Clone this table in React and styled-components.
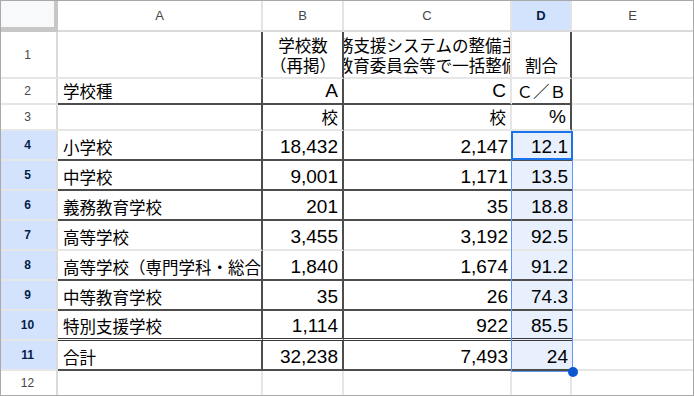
import React from 'react';
import styled, { createGlobalStyle } from 'styled-components';

const GlobalStyle = createGlobalStyle`
  html, body { margin: 0; padding: 0; background: #fff; }
  body { font-family: "Liberation Sans", Arial, "Noto Sans CJK JP", sans-serif; }
`;

const LIGHT = '2px solid #e6e6e6';
const DARK = '2px solid #4d4d4d';
const DOUBLE = '3px double #3a3a3a';
const borderOf = (k) =>
  k === 'dark' ? DARK : k === 'double' ? DOUBLE : k === 'none' ? 'none' : LIGHT;

const Sheet = styled.div`
  position: relative;
  width: 694px;
  height: 396px;
  box-sizing: border-box;
  border: 1px solid #a9a9a9;
  overflow: hidden;
  display: grid;
  grid-template-columns: 57px 205px 81px 168px 60px 121px;
  grid-template-rows: 31px 47px 26px 26px repeat(8, 30px) 24px;
  background: #fff;
`;

const Corner = styled.div`
  grid-row: 1;
  grid-column: 1;
  box-sizing: border-box;
  background: #f8f9fa;
  border-right: 4px solid #c7c7c7;
  border-bottom: 5px solid #c7c7c7;
`;

const ColHead = styled.div`
  grid-row: 1;
  grid-column: ${(p) => p.$c};
  box-sizing: border-box;
  display: flex;
  align-items: center;
  justify-content: center;
  padding-bottom: 1px;
  font-family: "Liberation Sans", Arial, sans-serif;
  font-size: 13px;
  color: ${(p) => (p.$sel ? '#041e49' : '#444746')};
  font-weight: ${(p) => (p.$sel ? 700 : 400)};
  background: ${(p) => (p.$sel ? '#d3e3fd' : '#fff')};
  border-right: ${(p) => (p.$last ? 'none' : '2px solid #e3e3e3')};
  border-bottom: 2px solid #dadada;
`;

const RowHead = styled.div`
  grid-row: ${(p) => p.$r};
  grid-column: 1;
  box-sizing: border-box;
  display: flex;
  align-items: center;
  justify-content: center;
  padding-right: 2px;
  font-family: "Liberation Sans", Arial, sans-serif;
  font-size: 12px;
  color: ${(p) => (p.$sel ? '#041e49' : '#444746')};
  font-weight: ${(p) => (p.$sel ? 700 : 400)};
  background: ${(p) => (p.$sel ? '#d3e3fd' : '#fff')};
  border-right: 2px solid #dadada;
  border-bottom: ${(p) => (p.$last ? 'none' : '2px solid #e6e6e6')};
`;

const Cell = styled.div`
  grid-row: ${(p) => p.$r};
  grid-column: ${(p) => p.$c};
  box-sizing: border-box;
  min-width: 0;
  overflow: hidden;
  display: flex;
  flex-direction: column;
  justify-content: flex-end;
  align-items: ${(p) =>
    p.$align === 'right' ? 'flex-end' : p.$align === 'center' ? 'center' : 'flex-start'};
  padding: 0 4px 2px 5px;
  background: ${(p) => (p.$sel ? '#e8f0fe' : '#fff')};
  border-right: ${(p) => borderOf(p.$br)};
  border-bottom: ${(p) => borderOf(p.$bb)};
  color: #000;
  white-space: nowrap;
  line-height: 20px;
`;

const Num = styled.span`
  display: block;
  font-family: "Liberation Sans", Arial, sans-serif;
  font-size: 19px;
  line-height: 20px;
`;

const Jp = styled.span`
  display: block;
  font-family: "Noto Sans CJK JP", "Noto Sans CJK SC", sans-serif;
  font-size: 16.5px;
  line-height: 20px;
  white-space: pre;
  text-align: center;
`;

const Range = styled.div`
  grid-row: 5 / 13;
  grid-column: 5;
  position: relative;
  box-sizing: border-box;
  margin: 0 -1px -1px -1px;
  border: 1.5px solid #5e97f6;
  pointer-events: none;
  z-index: 2;
`;

const Active = styled.div`
  grid-row: 5;
  grid-column: 5;
  box-sizing: border-box;
  margin: 0 -1px 1px -1px;
  border: 2px solid #1a73e8;
  pointer-events: none;
  z-index: 3;
`;

const Handle = styled.div`
  position: absolute;
  right: -6px;
  bottom: -6px;
  width: 10px;
  height: 10px;
  border-radius: 50%;
  background: #0b57d0;
`;

const rows = [
  { a: '小学校', b: '18,432', c: '2,147', d: '12.1', bb: 'dark' },
  { a: '中学校', b: '9,001', c: '1,171', d: '13.5', bb: 'dark' },
  { a: '義務教育学校', b: '201', c: '35', d: '18.8', bb: 'dark' },
  { a: '高等学校', b: '3,455', c: '3,192', d: '92.5', bb: 'light' },
  { a: '高等学校（専門学科・総合学科）', b: '1,840', c: '1,674', d: '91.2', bb: 'dark' },
  { a: '中等教育学校', b: '35', c: '26', d: '74.3', bb: 'dark' },
  { a: '特別支援学校', b: '1,114', c: '922', d: '85.5', bb: 'double' },
  { a: '合計', b: '32,238', c: '7,493', d: '24', bb: 'dark' },
];

const letters = ['A', 'B', 'C', 'D', 'E'];

export default function App() {
  return (
    <>
      <GlobalStyle />
      <Sheet>
        <Corner />
        {letters.map((l, i) => (
          <ColHead key={l} $c={i + 2} $sel={l === 'D'} $last={l === 'E'}>
            {l}
          </ColHead>
        ))}

        {Array.from({ length: 12 }, (_, i) => (
          <RowHead key={i} $r={i + 2} $sel={i + 1 >= 4 && i + 1 <= 11} $last={i === 11}>
            {i + 1}
          </RowHead>
        ))}

        {/* Row 1 */}
        <Cell $r={2} $c={2} $br="dark" />
        <Cell $r={2} $c={3} $br="dark" $align="center">
          <Jp>学校数</Jp>
          <Jp>（再掲）</Jp>
        </Cell>
        <Cell $r={2} $c={4} $align="center">
          <Jp>校務支援システムの整備主体</Jp>
          <Jp>教育委員会等で一括整備</Jp>
        </Cell>
        <Cell $r={2} $c={5} $br="dark" $align="center">
          <Jp>割合</Jp>
        </Cell>
        <Cell $r={2} $c={6} $br="none" />

        {/* Row 2 */}
        <Cell $r={3} $c={2} $br="dark" $bb="dark">
          <Jp>学校種</Jp>
        </Cell>
        <Cell $r={3} $c={3} $br="dark" $bb="dark" $align="right">
          <Num>A</Num>
        </Cell>
        <Cell $r={3} $c={4} $bb="dark" $align="right">
          <Num>C</Num>
        </Cell>
        <Cell $r={3} $c={5} $br="dark" $bb="dark" $align="right">
          <Jp>Ｃ／Ｂ</Jp>
        </Cell>
        <Cell $r={3} $c={6} $br="none" />

        {/* Row 3 */}
        <Cell $r={4} $c={2} $br="dark" />
        <Cell $r={4} $c={3} $br="dark" $align="right">
          <Jp>校</Jp>
        </Cell>
        <Cell $r={4} $c={4} $align="right">
          <Jp>校</Jp>
        </Cell>
        <Cell $r={4} $c={5} $br="dark" $align="right">
          <Num>%</Num>
        </Cell>
        <Cell $r={4} $c={6} $br="none" />

        {rows.map((row, i) => {
          const r = i + 5;
          return (
            <React.Fragment key={r}>
              <Cell $r={r} $c={2} $br="dark" $bb={row.bb}>
                <Jp>{row.a}</Jp>
              </Cell>
              <Cell $r={r} $c={3} $br="dark" $bb={row.bb} $align="right">
                <Num>{row.b}</Num>
              </Cell>
              <Cell $r={r} $c={4} $br="none" $bb={row.bb} $align="right">
                <Num>{row.c}</Num>
              </Cell>
              <Cell $r={r} $c={5} $br="none" $bb={row.bb} $align="right" $sel>
                <Num>{row.d}</Num>
              </Cell>
              <Cell $r={r} $c={6} $br="none" />
            </React.Fragment>
          );
        })}

        {/* Row 12 */}
        {[2, 3, 4, 5, 6].map((c) => (
          <Cell key={c} $r={13} $c={c} $bb="none" $br={c === 6 ? 'none' : 'light'} />
        ))}

        <Range>
          <Handle />
        </Range>
        <Active />
      </Sheet>
    </>
  );
}
